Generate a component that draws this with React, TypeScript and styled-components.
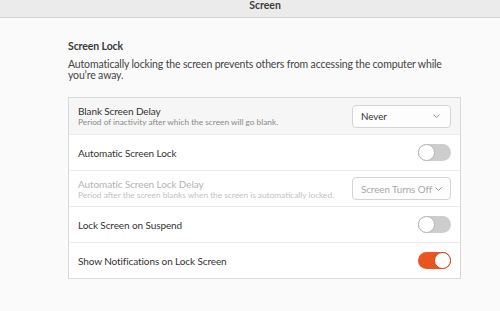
import * as React from "react";
import styled, { createGlobalStyle } from "styled-components";

const Global = createGlobalStyle`
    html, body {
        margin: 0;
        padding: 0;
        background: #fafafa;
        font-family: Lato, "Noto Sans", sans-serif;
        color: #3d3d3d;
    }
`;

const Page = styled.div`
    width: 500px;
    height: 311px;
    overflow: hidden;
    background: #fafafa;
`;

const TitleBar = styled.div`
    height: 18px;
    box-sizing: border-box;
    background: #ebebeb;
    border-bottom: 1px solid #d6d6d6;
    display: flex;
    align-items: center;
    justify-content: center;
    padding-left: 30px;
    padding-bottom: 6px;
    font-size: 10.5px;
    font-weight: bold;
    color: #3c3c3c;
    line-height: 1;
`;

const Content = styled.div`
    padding: 21px 39px 0 68px;
`;

const Heading = styled.div`
    font-size: 10.5px;
    letter-spacing: -0.1px;
    font-weight: bold;
    color: #3a3a3a;
    line-height: 14px;
`;

const Description = styled.div`
    margin-top: 6px;
    font-size: 10.5px;
    letter-spacing: -0.15px;
    line-height: 11px;
    color: #444;
    width: 393px;
`;

const List = styled.div`
    margin-top: 16px;
    border: 1px solid #d9d9d9;
    background: #ffffff;
`;

const Row = styled.div<{ $shade?: boolean }>`
    height: 36px;
    box-sizing: border-box;
    display: flex;
    align-items: center;
    justify-content: space-between;
    padding: 0 9px 0 9px;
    background: ${(p) => (p.$shade ? "#f6f6f6" : "#ffffff")};
    & + & {
        border-top: 1px solid #ebebeb;
    }
`;

const Labels = styled.div`
    display: flex;
    flex-direction: column;
`;

const Label = styled.div<{ $disabled?: boolean }>`
    font-size: 10px;
    letter-spacing: -0.1px;
    line-height: 12px;
    color: ${(p) => (p.$disabled ? "#b3b3b3" : "#333333")};
`;

const Sub = styled.div<{ $disabled?: boolean }>`
    font-size: 8.3px;
    line-height: 10px;
    color: ${(p) => (p.$disabled ? "#c2c2c2" : "#8a8a8a")};
`;

const Dropdown = styled.div<{ $disabled?: boolean }>`
    width: 99px;
    height: 23px;
    box-sizing: border-box;
    border: 1px solid #d4d4d4;
    border-radius: 4px;
    background: #fdfdfd;
    display: flex;
    align-items: center;
    justify-content: space-between;
    padding: 0 10px 0 8px;
    white-space: nowrap;
    font-size: 9.8px;
    letter-spacing: -0.05px;
    color: ${(p) => (p.$disabled ? "#a8a8a8" : "#333333")};
    & svg {
        margin-left: 3px;
        flex-shrink: 0;
    }
`;

const Chevron = () => (
    <svg width="7" height="4" viewBox="0 0 7 4">
        <path d="M0.5 0.5 L3.5 3.5 L6.5 0.5" fill="none" stroke="#8c8c8c" strokeWidth="0.9" />
    </svg>
);

const Track = styled.div<{ $on?: boolean }>`
    width: 33px;
    height: 17px;
    box-sizing: border-box;
    border-radius: 9px;
    background: ${(p) => (p.$on ? "#e95420" : "#cdcdcd")};
    display: flex;
    align-items: center;
    justify-content: ${(p) => (p.$on ? "flex-end" : "flex-start")};
`;

const Knob = styled.div<{ $on?: boolean }>`
    width: 17px;
    height: 17px;
    box-sizing: border-box;
    border-radius: 50%;
    background: #ffffff;
    border: 1px solid ${(p) => (p.$on ? "#d24a1a" : "#b5b5b5")};
`;

const Switch = ({ on }: { on?: boolean }) => (
    <Track $on={on}>
        <Knob $on={on} />
    </Track>
);

export default function App() {
    return (
        <Page>
            <Global />
            <TitleBar>Screen</TitleBar>
            <Content>
                <Heading>Screen Lock</Heading>
                <Description>
                    Automatically locking the screen prevents others from accessing the computer while
                    you’re away.
                </Description>
                <List>
                    <Row $shade>
                        <Labels>
                            <Label>Blank Screen Delay</Label>
                            <Sub>Period of inactivity after which the screen will go blank.</Sub>
                        </Labels>
                        <Dropdown>
                            Never
                            <Chevron />
                        </Dropdown>
                    </Row>
                    <Row>
                        <Label>Automatic Screen Lock</Label>
                        <Switch />
                    </Row>
                    <Row>
                        <Labels>
                            <Label $disabled>Automatic Screen Lock Delay</Label>
                            <Sub $disabled>
                                Period after the screen blanks when the screen is automatically locked.
                            </Sub>
                        </Labels>
                        <Dropdown $disabled>
                            Screen Turns Off
                            <Chevron />
                        </Dropdown>
                    </Row>
                    <Row>
                        <Label>Lock Screen on Suspend</Label>
                        <Switch />
                    </Row>
                    <Row>
                        <Label>Show Notifications on Lock Screen</Label>
                        <Switch on />
                    </Row>
                </List>
            </Content>
        </Page>
    );
}
